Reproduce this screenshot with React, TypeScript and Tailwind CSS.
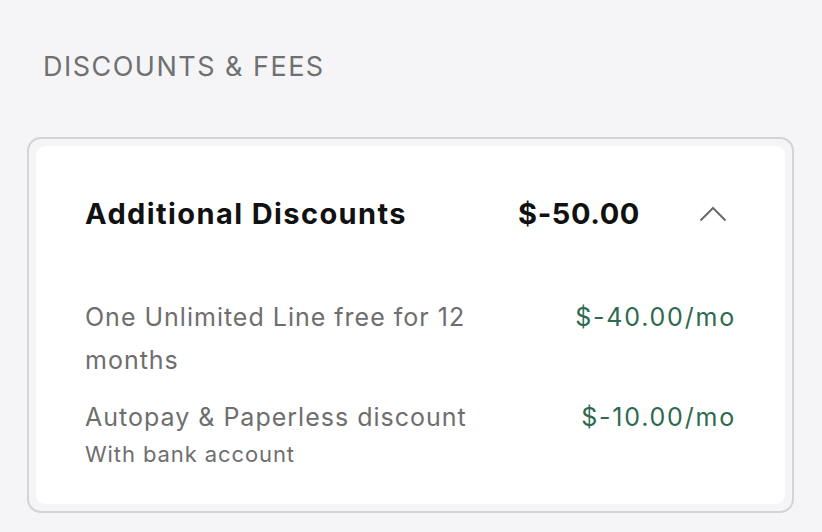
interface LineItem {
  label: string;
  note?: string;
  amount: string;
}

const items: LineItem[] = [
  { label: "One Unlimited Line free for 12 months", amount: "$-40.00/mo" },
  { label: "Autopay & Paperless discount", note: "With bank account", amount: "$-10.00/mo" },
];

export default function App() {
  return (
    <div className="h-[532px] w-full bg-[#f5f5f7] font-['Inter',sans-serif] overflow-hidden">
      <h2 className="pl-[43px] pt-[50px] text-[27px] leading-[34px] tracking-[0.055em] text-[#707070] font-normal">
        DISCOUNTS &amp; FEES
      </h2>

      <div className="mt-[53px] ml-[27px] w-[767px] rounded-[14px] border-2 border-[#d3d3d9] p-[7px]">
        <div className="rounded-[9px] bg-white px-[49px] pt-[50px] pb-[34px]">
          {/* Header row */}
          <div className="flex items-center">
            <span className="flex-1 text-[29px] leading-[36px] font-bold tracking-[1.4px] text-[#111]">
              Additional Discounts
            </span>
            <span className="text-[29px] leading-[36px] font-bold tracking-[0.6px] text-[#111]">$-50.00</span>
            {/* Collapse chevron */}
            <button className="ml-[59px] mr-[9px] flex h-[36px] w-[28px] items-center justify-center text-[#6b6b6b]">
              <svg width="28" height="16" viewBox="0 0 28 16" fill="none" stroke="currentColor" strokeWidth={2}>
                <polyline points="1.5,14.5 14,2 26.5,14.5" />
              </svg>
            </button>
          </div>

          <div className="mt-[64px] flex flex-col gap-[14px]">
            {items.map((item) => (
              <div key={item.amount} className="flex items-start justify-between gap-8">
                <div className="max-w-[420px]">
                  <p className="text-[25px] leading-[43px] tracking-[1px] text-[#6e6e6e]">{item.label}</p>
                  {item.note && (
                    <p className="text-[22px] leading-[31px] tracking-[0.9px] text-[#6e6e6e]">{item.note}</p>
                  )}
                </div>
                <span className="whitespace-nowrap text-[25px] leading-[43px] tracking-[1.8px] text-[#2d6a4f]">
                  {item.amount}
                </span>
              </div>
            ))}
          </div>
        </div>
      </div>
    </div>
  );
}
